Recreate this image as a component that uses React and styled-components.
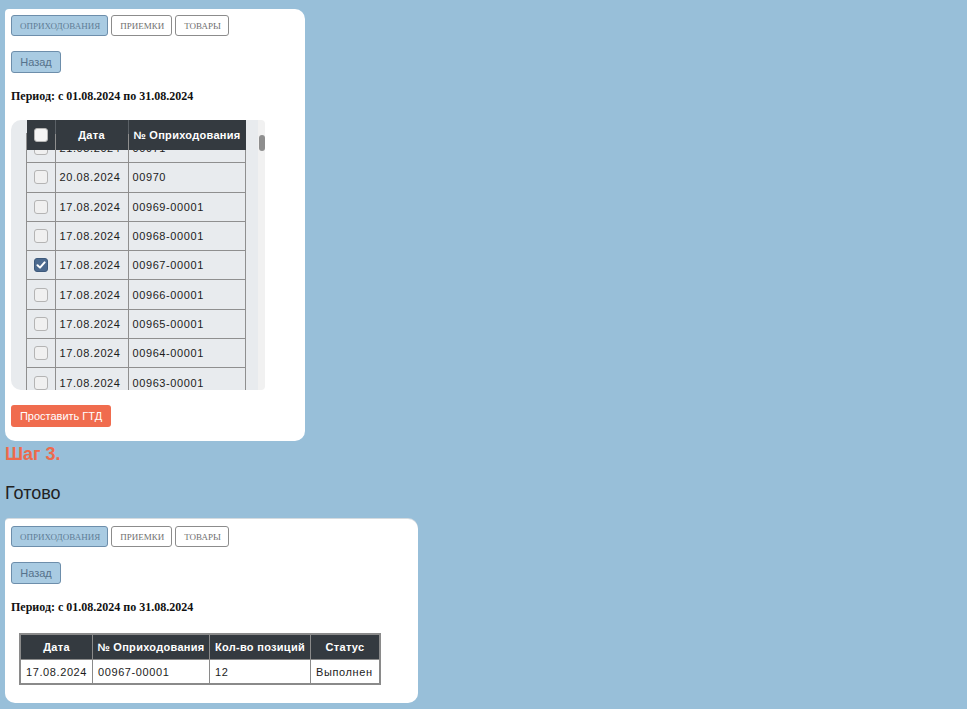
import React, { useLayoutEffect, useRef } from "react";
import styled, { createGlobalStyle } from "styled-components";

const GlobalStyle = createGlobalStyle`
  html, body {
    margin: 0;
    padding: 0;
    background: #98bfd9;
  }
  body {
    font-family: "Liberation Sans", Arial, sans-serif;
  }
`;

const pickRows = [
  { date: "21.08.2024", num: "00971", checked: false },
  { date: "20.08.2024", num: "00970", checked: false },
  { date: "17.08.2024", num: "00969-00001", checked: false },
  { date: "17.08.2024", num: "00968-00001", checked: false },
  { date: "17.08.2024", num: "00967-00001", checked: true },
  { date: "17.08.2024", num: "00966-00001", checked: false },
  { date: "17.08.2024", num: "00965-00001", checked: false },
  { date: "17.08.2024", num: "00964-00001", checked: false },
  { date: "17.08.2024", num: "00963-00001", checked: false },
  { date: "16.08.2024", num: "00962-00001", checked: false },
  { date: "16.08.2024", num: "00961-00001", checked: false },
  { date: "15.08.2024", num: "00960-00001", checked: false },
];

export default function App() {
  const viewRef = useRef(null);

  useLayoutEffect(() => {
    if (viewRef.current) viewRef.current.scrollTop = 17;
  }, []);

  return (
    <Page>
      <GlobalStyle />
      <Card $width={300}>
        <Tabs />
        <BackButton>Назад</BackButton>
        <Period>Период: с 01.08.2024 по 31.08.2024</Period>
        <ScrollBox>
          <Viewport ref={viewRef}>
            <PickTable>
              <thead>
                <tr>
                  <PickHead $w={28}>
                    <Check $head />
                  </PickHead>
                  <PickHead $w={72}>Дата</PickHead>
                  <PickHead $w={117}>№ Оприходования</PickHead>
                </tr>
              </thead>
              <tbody>
                {pickRows.map((r, i) => (
                  <tr key={i}>
                    <PickCell $center>
                      <Check $checked={r.checked}>
                        {r.checked && (
                          <svg width="10" height="10" viewBox="0 0 10 10">
                            <polyline
                              points="1.5,5.2 4,7.6 8.6,2.4"
                              fill="none"
                              stroke="#fff"
                              strokeWidth="2"
                              strokeLinecap="round"
                              strokeLinejoin="round"
                            />
                          </svg>
                        )}
                      </Check>
                    </PickCell>
                    <PickCell>{r.date}</PickCell>
                    <PickCell>{r.num}</PickCell>
                  </tr>
                ))}
              </tbody>
            </PickTable>
          </Viewport>
          <Track>
            <Thumb />
          </Track>
        </ScrollBox>
        <ActionButton>Проставить ГТД</ActionButton>
      </Card>

      <StepTitle>Шаг 3.</StepTitle>
      <StepText>Готово</StepText>

      <Card $width={413} $second>
        <Tabs />
        <BackButton>Назад</BackButton>
        <Period>Период: с 01.08.2024 по 31.08.2024</Period>
        <ResultTable>
          <thead>
            <tr>
              <ResultHead $w={73}>Дата</ResultHead>
              <ResultHead $w={116}>№ Оприходования</ResultHead>
              <ResultHead $w={100}>Кол-во позиций</ResultHead>
              <ResultHead $w={68}>Статус</ResultHead>
            </tr>
          </thead>
          <tbody>
            <tr>
              <ResultCell>17.08.2024</ResultCell>
              <ResultCell>00967-00001</ResultCell>
              <ResultCell>12</ResultCell>
              <ResultCell>Выполнен</ResultCell>
            </tr>
          </tbody>
        </ResultTable>
      </Card>
    </Page>
  );
}

function Tabs() {
  return (
    <TabBar>
      <Tab $active>Оприходования</Tab>
      <Tab>Приемки</Tab>
      <Tab>Товары</Tab>
    </TabBar>
  );
}

const Page = styled.div`
  padding: 9px 5px 5px 5px;
  display: flex;
  flex-direction: column;
  align-items: flex-start;
`;

const Card = styled.section`
  width: ${(p) => p.$width}px;
  box-sizing: border-box;
  background: #ffffff;
  border-radius: 4px 10px 10px 10px;
  padding: ${(p) => (p.$second ? "7px 6px 18px 6px" : "6px 6px 14px 6px")};
  display: flex;
  flex-direction: column;
  align-items: flex-start;
  ${(p) => p.$second && "box-shadow: 0 -1px 0 #d5dbe0;"}
`;

const TabBar = styled.div`
  display: flex;
  gap: 3px;
`;

const Tab = styled.button`
  height: 21px;
  padding: 0 7px 0 8px;
  margin: 0;
  font-family: "Liberation Serif", "Times New Roman", serif;
  font-size: 9px;
  text-transform: uppercase;
  color: ${(p) => (p.$active ? "#5f7d96" : "#6f6f6f")};
  background: ${(p) => (p.$active ? "#a9cbe2" : "#ffffff")};
  border: 1px solid ${(p) => (p.$active ? "#6d8eab" : "#8c8c8c")};
  border-radius: 3px;
`;

const BackButton = styled.button`
  margin-top: 15px;
  width: 50px;
  height: 22px;
  padding: 0;
  font-family: "Liberation Sans", Arial, sans-serif;
  font-size: 11px;
  color: #56728c;
  background: #a9cbe2;
  border: 1px solid #6d8eab;
  border-radius: 3px;
`;

const Period = styled.div`
  margin-top: 16px;
  font-family: "Liberation Serif", "Times New Roman", serif;
  font-weight: bold;
  font-size: 12px;
  line-height: 14px;
  color: #111;
`;

const ScrollBox = styled.div`
  margin-top: 17px;
  display: flex;
  height: 270px;
`;

const Viewport = styled.div`
  width: 247px;
  height: 270px;
  box-sizing: border-box;
  overflow: hidden;
  background: #e8ebee;
  border-radius: 10px 0 0 10px;
  padding: 0 15px;
`;

const Track = styled.div`
  width: 7px;
  height: 270px;
  background: #f1f1f1;
  border-radius: 0 4px 4px 0;
  padding-top: 15px;
  box-sizing: border-box;
  display: flex;
  justify-content: center;
`;

const Thumb = styled.div`
  width: 6px;
  height: 16px;
  border-radius: 3px;
  background: #8e8e8e;
`;

const PickTable = styled.table`
  border-collapse: collapse;
  table-layout: fixed;
  width: 217px;
  font-family: "Liberation Sans", Arial, sans-serif;
  font-size: 11px;
  letter-spacing: 0.6px;
  color: #1c1c1c;
`;

const PickHead = styled.th`
  position: sticky;
  top: 0;
  z-index: 1;
  width: ${(p) => p.$w}px;
  height: 30px;
  padding: 0;
  background: #343a40;
  color: #ffffff;
  font-weight: bold;
  letter-spacing: 0.3px;
  text-align: center;
  border-left: 1px solid #5a6066;
  &:first-child {
    border-left: none;
  }
`;

const PickCell = styled.td`
  height: 28.3px;
  padding: 0 0 0 4px;
  border: 1px solid #8f8f8f;
  background: #e8ebee;
  white-space: nowrap;
  ${(p) => p.$center && "padding: 0; text-align: center;"}
`;

const Check = styled.span`
  display: inline-flex;
  align-items: center;
  justify-content: center;
  vertical-align: middle;
  box-sizing: border-box;
  width: 14px;
  height: 14px;
  border-radius: 3px;
  border: 1px solid ${(p) => (p.$checked ? "#3e5a7c" : "#b4b4b4")};
  background: ${(p) => (p.$checked ? "#4c6a8f" : p.$head ? "#f4f4f4" : "#f0f0f0")};
`;

const ActionButton = styled.button`
  margin-top: 15px;
  height: 22px;
  width: 100px;
  padding: 0;
  border: none;
  border-radius: 3px;
  background: #f06c4e;
  color: #ffffff;
  font-family: "Liberation Sans", Arial, sans-serif;
  font-size: 11px;
`;

const StepTitle = styled.div`
  margin-top: 3px;
  font-family: "Liberation Sans", Arial, sans-serif;
  font-weight: bold;
  font-size: 18px;
  line-height: 20px;
  color: #ee6a4c;
`;

const StepText = styled.div`
  margin-top: 18px;
  font-family: "Liberation Sans", Arial, sans-serif;
  font-size: 18px;
  line-height: 22px;
  color: #222;
  margin-bottom: 15px;
`;

const ResultTable = styled.table`
  margin: 19px 0 0 8px;
  border-collapse: collapse;
  table-layout: fixed;
  width: 354px;
  border: 2px solid #8a8a8a;
  font-family: "Liberation Sans", Arial, sans-serif;
  font-size: 11px;
  letter-spacing: 0.6px;
  color: #1c1c1c;
`;

const ResultHead = styled.th`
  width: ${(p) => p.$w}px;
  height: 24px;
  padding: 0;
  background: #343a40;
  color: #ffffff;
  font-weight: bold;
  letter-spacing: 0.3px;
  text-align: center;
  border: 1px solid #8a8a8a;
  &:first-child {
    width: ${(p) => p.$w - 2}px;
  }
`;

const ResultCell = styled.td`
  height: 23px;
  padding: 0 0 0 5px;
  border: 1px solid #8a8a8a;
  background: #ffffff;
  white-space: nowrap;
`;
